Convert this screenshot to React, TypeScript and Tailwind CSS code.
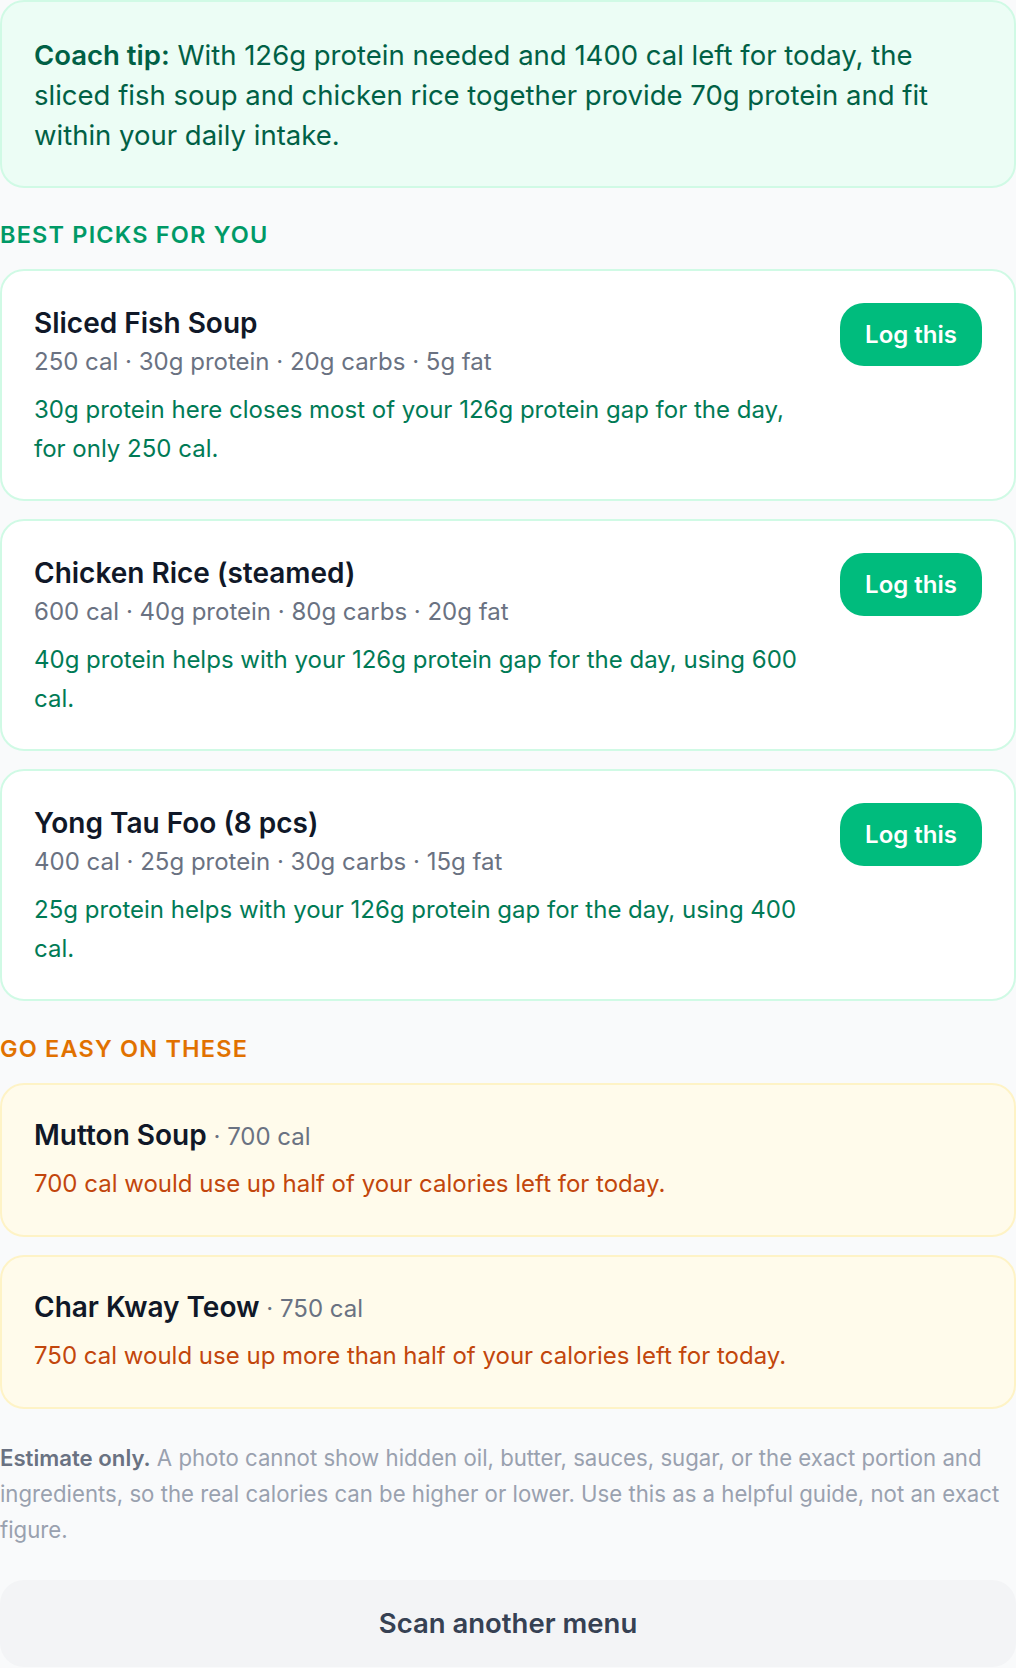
import React from "react";

type Pick = { name: string; meta: string; why: string };
type Warn = { name: string; cal: string; why: string };

const picks: Pick[] = [
  {
    name: "Sliced Fish Soup",
    meta: "250 cal · 30g protein · 20g carbs · 5g fat",
    why: "30g protein here closes most of your 126g protein gap for the day, for only 250 cal.",
  },
  {
    name: "Chicken Rice (steamed)",
    meta: "600 cal · 40g protein · 80g carbs · 20g fat",
    why: "40g protein helps with your 126g protein gap for the day, using 600 cal.",
  },
  {
    name: "Yong Tau Foo (8 pcs)",
    meta: "400 cal · 25g protein · 30g carbs · 15g fat",
    why: "25g protein helps with your 126g protein gap for the day, using 400 cal.",
  },
];

const warns: Warn[] = [
  {
    name: "Mutton Soup",
    cal: "700 cal",
    why: "700 cal would use up half of your calories left for today.",
  },
  {
    name: "Char Kway Teow",
    cal: "750 cal",
    why: "750 cal would use up more than half of your calories left for today.",
  },
];

export default function App() {
  return (
    <div className="min-h-screen bg-gray-50 font-['Inter',sans-serif]">
      <div className="rounded-3xl border-2 border-emerald-100 bg-emerald-50 px-[32px] pt-[33px] pb-[31px] text-[27.5px] leading-[40px] text-emerald-800">
        <span className="font-semibold">Coach tip:</span> With 126g protein needed and 1400 cal left for
        today, the sliced fish soup and chicken rice together provide 70g protein and fit within your
        daily intake.
      </div>

      <h2 className="mt-[31px] mb-[18px] text-[23.5px] leading-[32px] font-semibold uppercase tracking-wider text-emerald-600">
        Best picks for you
      </h2>

      <div className="flex flex-col gap-[18px]">
        {picks.map((p) => (
          <div
            key={p.name}
            className="flex items-start gap-[32px] rounded-3xl border-2 border-emerald-100 bg-white px-8 pt-8 pb-[31px]"
          >
            <div className="min-w-0 flex-1">
              <div className="text-[28px] leading-[41px] font-semibold text-gray-900">{p.name}</div>
              <div className="text-[24px] leading-[36px] text-gray-500">{p.meta}</div>
              <div className="mt-[10px] text-[24px] leading-[39px] text-emerald-700">{p.why}</div>
            </div>
            <button className="flex h-[63px] shrink-0 items-center rounded-3xl bg-emerald-500 px-[25px] text-[24px] font-semibold text-white">
              Log this
            </button>
          </div>
        ))}
      </div>

      <h2 className="mt-[32px] mb-[18px] text-[23.5px] leading-[32px] font-semibold uppercase tracking-wider text-amber-600">
        Go easy on these
      </h2>

      <div className="flex flex-col gap-[18px]">
        {warns.map((w) => (
          <div key={w.name} className="rounded-3xl border-2 border-amber-100 bg-amber-50 p-8">
            <div className="text-[28px] leading-[37px]">
              <span className="font-semibold text-gray-900">{w.name}</span>
              <span className="text-[24px] leading-none text-gray-500"> · {w.cal}</span>
            </div>
            <div className="mt-[10px] text-[24px] leading-[39px] text-[#c2460c]">{w.why}</div>
          </div>
        ))}
      </div>

      <p className="mt-[31px] text-[22.2px] leading-[36px] text-gray-400">
        <span className="font-semibold text-gray-500">Estimate only.</span> A photo cannot show hidden
        oil, butter, sauces, sugar, or the exact portion and ingredients, so the real calories can be
        higher or lower. Use this as a helpful guide, not an exact figure.
      </p>

      <button className="mt-[32px] flex h-[87px] w-full items-center justify-center rounded-3xl bg-gray-100 text-[27.5px] font-semibold text-gray-700">
        Scan another menu
      </button>
    </div>
  );
}
